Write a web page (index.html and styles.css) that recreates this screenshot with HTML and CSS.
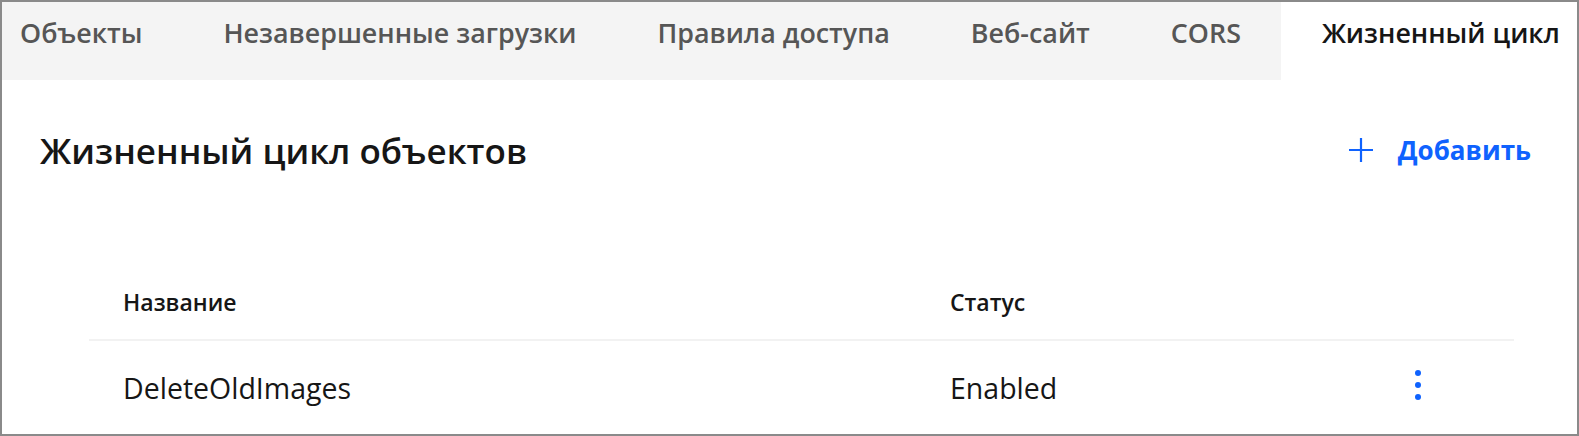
FILE: index.html
```html
<!DOCTYPE html>
<html lang="ru">
<head>
  <meta charset="UTF-8" />
  <meta name="viewport" content="width=device-width, initial-scale=1.0" />
  <title>Жизненный цикл</title>
  <link rel="stylesheet" href="styles.css">
</head>
<body>
  <div class="frame">
    <!-- Tabs -->
    <div class="tabs">
      <a class="tab first" href="#">Объекты</a>
      <a class="tab" href="#">Незавершенные загрузки</a>
      <a class="tab" href="#">Правила доступа</a>
      <a class="tab" href="#">Веб-сайт</a>
      <a class="tab" href="#">CORS</a>
      <a class="tab active" href="#">Жизненный цикл</a>
    </div>

    <div class="section-head">
      <h1>Жизненный цикл объектов</h1>
      <button class="add-btn">
        <svg width="26" height="26" viewBox="0 0 26 26" aria-hidden="true">
          <path d="M13 1v24M1 13h24" stroke="#0f62fe" stroke-width="2.2" fill="none"/>
        </svg>
        <span>Добавить</span>
      </button>
    </div>

    <div class="rules">
      <div class="row head">
        <div class="cell">Название</div>
        <div class="cell">Статус</div>
        <div class="cell"></div>
      </div>
      <div class="row">
        <div class="cell">DeleteOldImages</div>
        <div class="cell">Enabled</div>
        <div class="cell menu">
          <span class="kebab"><i></i><i></i><i></i></span>
        </div>
      </div>
    </div>
  </div>
</body>
</html>
```

FILE: styles.css
```css
* {
  box-sizing: border-box;
}

body {
  margin: 0;
  font-family: "Open Sans", "Noto Sans", Arial, sans-serif;
  background-color: #fff;
  color: #161616;
}

.frame {
  height: 436px;
  border: 2px solid #8a8a8a;
  overflow: hidden;
}

/* tab bar */
.tabs {
  display: flex;
  height: 78px;
  background-color: #f4f4f4;
}
.tab {
  display: block;
  padding: 12px 40px 0 41px;
  font-size: 26.85px;
  font-weight: 600;
  color: #565656;
  text-decoration: none;
  white-space: nowrap;
}
.tab.first {
  padding-left: 18px;
}
.tab.active {
  flex: 1;
  background-color: #fff;
  color: #161616;
}

/* heading row */
.section-head {
  display: flex;
  align-items: center;
  justify-content: space-between;
  height: 64px;
  margin-top: 38px;
  padding: 0 46px 0 38px;
}
h1 {
  margin: 0;
  font-size: 35px;
  font-weight: 600;
  color: #161616;
}
.add-btn {
  display: flex;
  align-items: center;
  gap: 24px;
  background: none;
  border: none;
  padding: 0;
  font-family: inherit;
  font-size: 26px;
  font-weight: 700;
  color: #0f62fe;
  cursor: pointer;
}

/* table */
.rules {
  margin: 83px 63px 0 87px;
}
.row {
  display: grid;
  grid-template-columns: 827px 1fr 80px;
  align-items: center;
  height: 94px;
  padding-right: 56px;
}
.row.head {
  height: 76px;
  border-bottom: 2px solid #f2f2f2;
  font-weight: 600;
}
.row .cell {
  padding-left: 34px;
  font-size: 28.5px;
}
.row.head .cell {
  font-size: 23px;
}
.cell.menu {
  padding-left: 0;
  display: flex;
  justify-content: center;
}
.kebab {
  display: flex;
  flex-direction: column;
  gap: 6px;
  padding-bottom: 6px;
}
.kebab i {
  display: block;
  width: 6px;
  height: 6px;
  border-radius: 50%;
  background-color: #0f62fe;
}
```
